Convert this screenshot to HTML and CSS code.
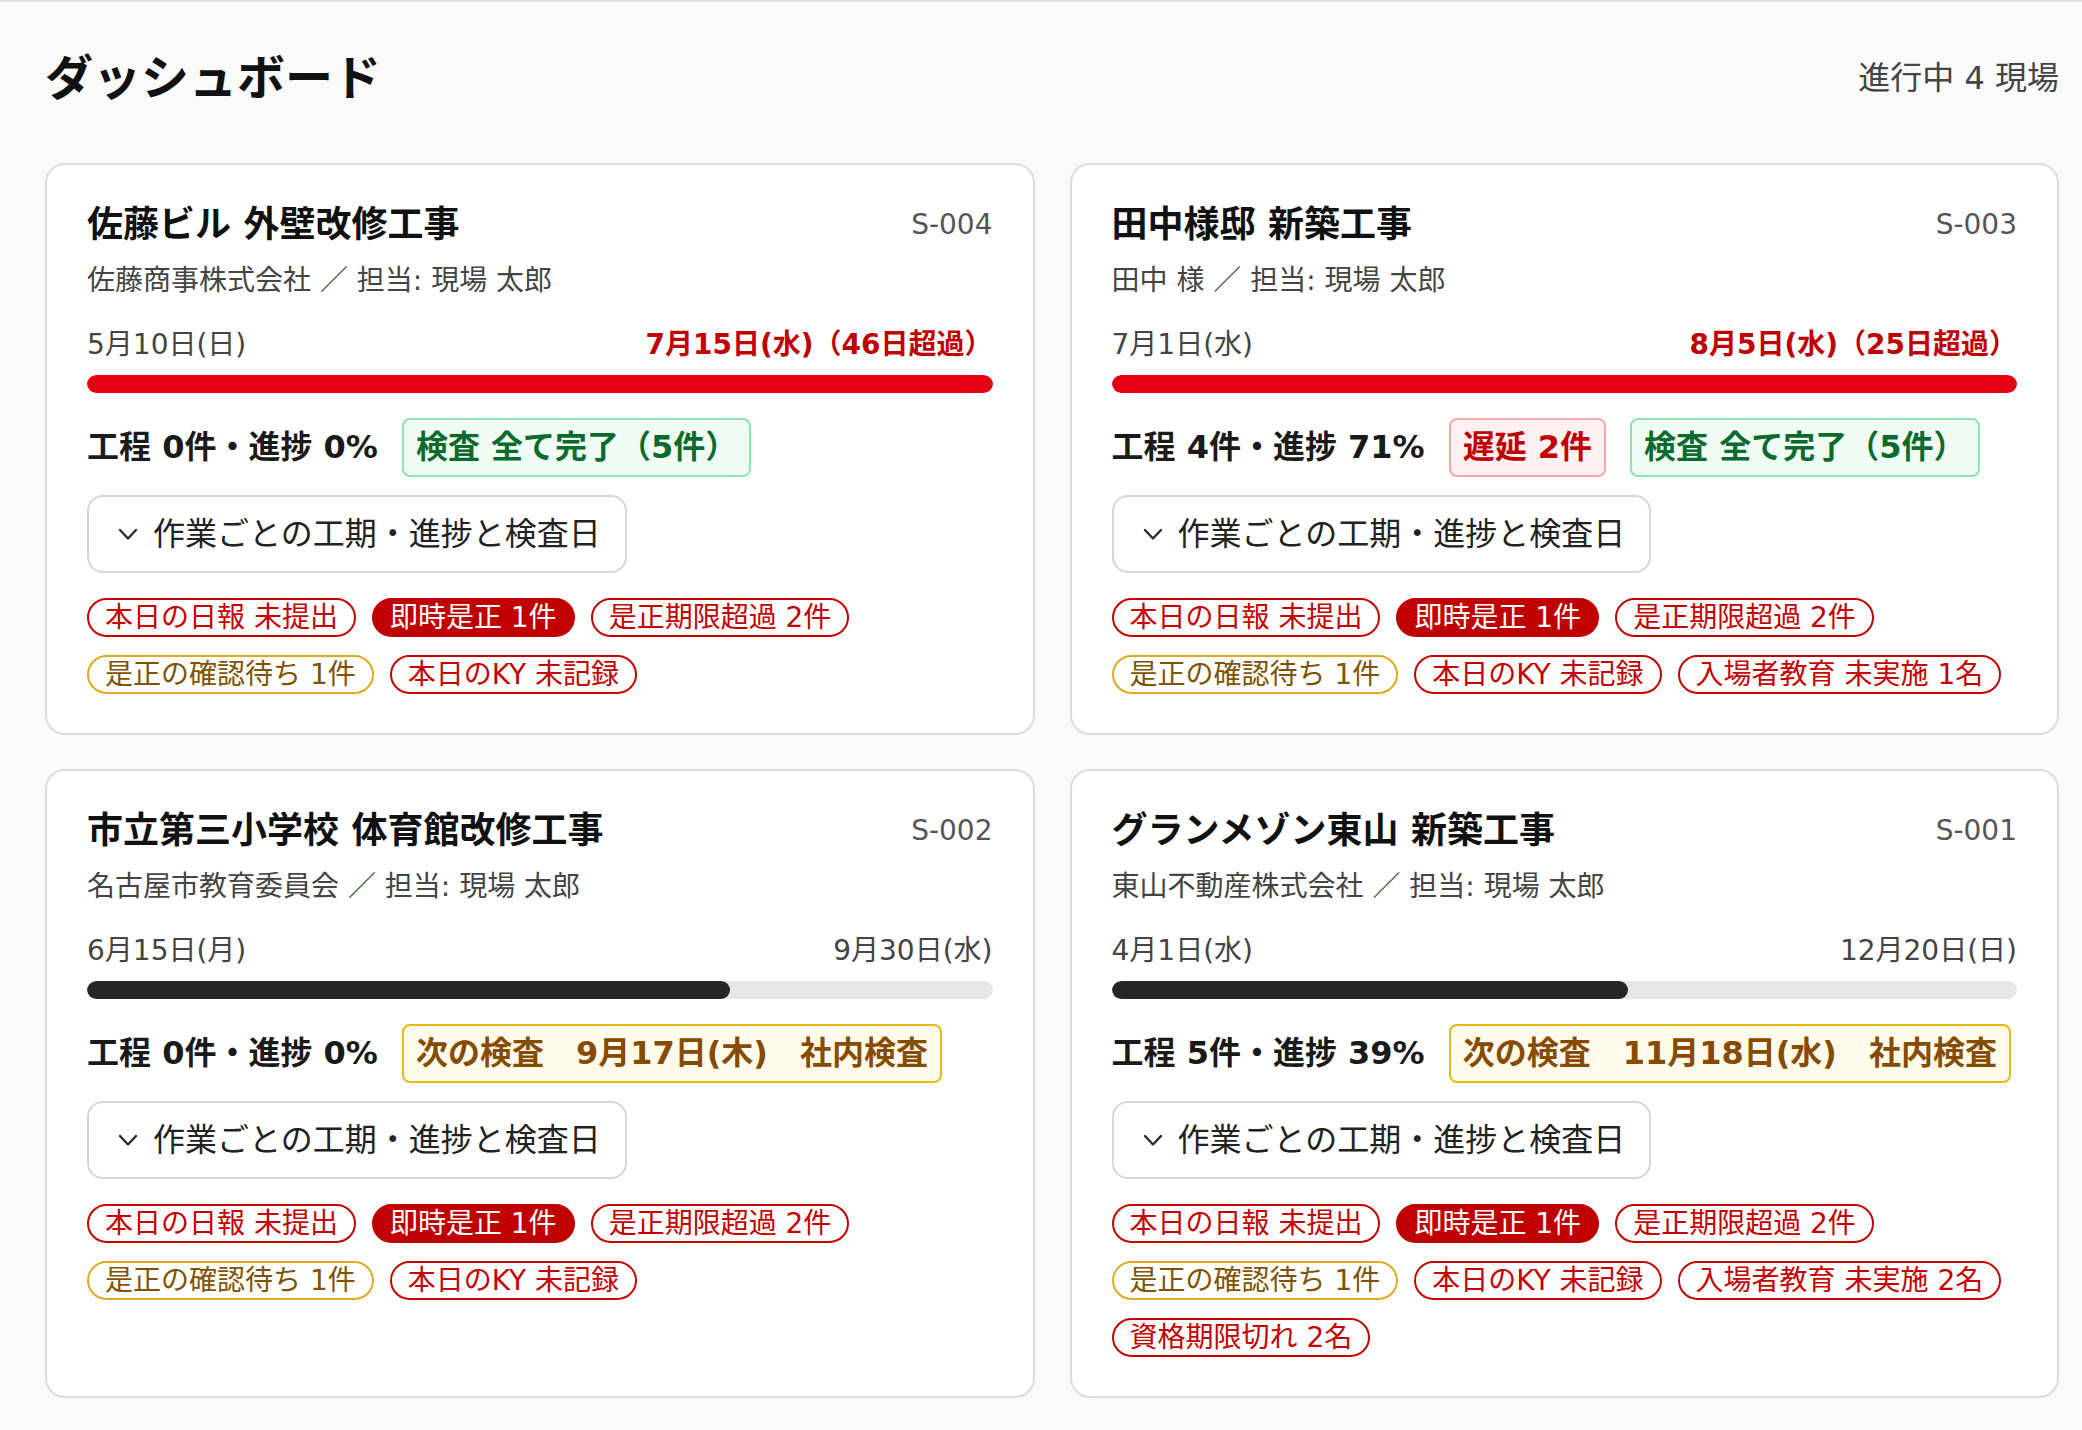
FILE: index.html
```html
<!DOCTYPE html>
<html lang="ja">
<head>
<meta charset="utf-8">
<title>ダッシュボード</title>
<link rel="stylesheet" href="styles.css">
</head>
<body>
<div class="page">
  <header class="page-head">
    <h1 class="page-title">ダッシュボード</h1>
    <div class="page-count">進行中 4 現場</div>
  </header>

  <main class="site-grid">
    <!-- S-004 -->
    <section class="site-card">
      <div class="site-head">
        <h2 class="site-name">佐藤ビル 外壁改修工事</h2>
        <span class="site-code">S-004</span>
      </div>
      <p class="site-meta">佐藤商事株式会社 ／ 担当: 現場 太郎</p>
      <div class="site-dates">
        <span>5月10日(日)</span>
        <span class="date-late">7月15日(水)（46日超過）</span>
      </div>
      <div class="bar"><div class="bar-fill late" style="width:100%"></div></div>
      <div class="site-stats">
        <span class="stat">工程 0件・進捗 0%</span>
        <span class="chip ok">検査 全て完了（5件）</span>
      </div>
      <button class="detail-toggle" type="button">
        <svg class="chev" width="20" height="13" viewBox="0 0 20 13"><polyline points="2,2 10,10.5 18,2"/></svg>
        <span>作業ごとの工期・進捗と検査日</span>
      </button>
      <ul class="tags">
        <li class="tag">本日の日報 未提出</li>
        <li class="tag solid">即時是正 1件</li>
        <li class="tag">是正期限超過 2件</li>
        <li class="tag warn">是正の確認待ち 1件</li>
        <li class="tag">本日のKY 未記録</li>
      </ul>
    </section>

    <!-- S-003 -->
    <section class="site-card">
      <div class="site-head">
        <h2 class="site-name">田中様邸 新築工事</h2>
        <span class="site-code">S-003</span>
      </div>
      <p class="site-meta">田中 様 ／ 担当: 現場 太郎</p>
      <div class="site-dates">
        <span>7月1日(水)</span>
        <span class="date-late">8月5日(水)（25日超過）</span>
      </div>
      <div class="bar"><div class="bar-fill late" style="width:100%"></div></div>
      <div class="site-stats">
        <span class="stat">工程 4件・進捗 71%</span>
        <span class="chip late">遅延 2件</span>
        <span class="chip ok">検査 全て完了（5件）</span>
      </div>
      <button class="detail-toggle" type="button">
        <svg class="chev" width="20" height="13" viewBox="0 0 20 13"><polyline points="2,2 10,10.5 18,2"/></svg>
        <span>作業ごとの工期・進捗と検査日</span>
      </button>
      <ul class="tags">
        <li class="tag">本日の日報 未提出</li>
        <li class="tag solid">即時是正 1件</li>
        <li class="tag">是正期限超過 2件</li>
        <li class="tag warn">是正の確認待ち 1件</li>
        <li class="tag">本日のKY 未記録</li>
        <li class="tag">入場者教育 未実施 1名</li>
      </ul>
    </section>

    <!-- S-002 -->
    <section class="site-card">
      <div class="site-head">
        <h2 class="site-name">市立第三小学校 体育館改修工事</h2>
        <span class="site-code">S-002</span>
      </div>
      <p class="site-meta">名古屋市教育委員会 ／ 担当: 現場 太郎</p>
      <div class="site-dates">
        <span>6月15日(月)</span>
        <span>9月30日(水)</span>
      </div>
      <div class="bar"><div class="bar-fill" style="width:71%"></div></div>
      <div class="site-stats">
        <span class="stat">工程 0件・進捗 0%</span>
        <span class="chip next"><span>次の検査</span><span>9月17日(木)</span><span>社内検査</span></span>
      </div>
      <button class="detail-toggle" type="button">
        <svg class="chev" width="20" height="13" viewBox="0 0 20 13"><polyline points="2,2 10,10.5 18,2"/></svg>
        <span>作業ごとの工期・進捗と検査日</span>
      </button>
      <ul class="tags">
        <li class="tag">本日の日報 未提出</li>
        <li class="tag solid">即時是正 1件</li>
        <li class="tag">是正期限超過 2件</li>
        <li class="tag warn">是正の確認待ち 1件</li>
        <li class="tag">本日のKY 未記録</li>
      </ul>
    </section>

    <!-- S-001 -->
    <section class="site-card">
      <div class="site-head">
        <h2 class="site-name">グランメゾン東山 新築工事</h2>
        <span class="site-code">S-001</span>
      </div>
      <p class="site-meta">東山不動産株式会社 ／ 担当: 現場 太郎</p>
      <div class="site-dates">
        <span>4月1日(水)</span>
        <span>12月20日(日)</span>
      </div>
      <div class="bar"><div class="bar-fill" style="width:57%"></div></div>
      <div class="site-stats">
        <span class="stat">工程 5件・進捗 39%</span>
        <span class="chip next"><span>次の検査</span><span>11月18日(水)</span><span>社内検査</span></span>
      </div>
      <button class="detail-toggle" type="button">
        <svg class="chev" width="20" height="13" viewBox="0 0 20 13"><polyline points="2,2 10,10.5 18,2"/></svg>
        <span>作業ごとの工期・進捗と検査日</span>
      </button>
      <ul class="tags">
        <li class="tag">本日の日報 未提出</li>
        <li class="tag solid">即時是正 1件</li>
        <li class="tag">是正期限超過 2件</li>
        <li class="tag warn">是正の確認待ち 1件</li>
        <li class="tag">本日のKY 未記録</li>
        <li class="tag">入場者教育 未実施 2名</li>
        <li class="tag">資格期限切れ 2名</li>
      </ul>
    </section>
  </main>
</div>
</body>
</html>
```

FILE: styles.css
```css
* {
  box-sizing: border-box;
}

html,
body {
  margin: 0;
}

body {
  background: #fafafa;
  font-family: "DejaVu Sans", "Noto Sans CJK JP", sans-serif;
  color: #1a1a1a;
}

.page {
  border-top: 2px solid #e4e4e4;
  padding: 44px 23px 40px 45px;
}

/* page header */
.page-head {
  display: flex;
  justify-content: space-between;
  align-items: center;
  height: 64px;
  margin-bottom: 53px;
}

.page-title {
  margin: 0;
  font-size: 48px;
  font-weight: 700;
  line-height: 64px;
  color: #111;
}

.page-count {
  font-size: 32px;
  line-height: 64px;
  color: #444;
}

/* site cards */
.site-grid {
  display: grid;
  grid-template-columns: 1fr 1fr;
  column-gap: 35px;
  row-gap: 34px;
}

.site-card {
  display: flex;
  flex-direction: column;
  background: #fff;
  border: 2px solid #dcdcdc;
  border-radius: 20px;
  padding: 38px 40px 39px;
}

.site-head {
  display: flex;
  justify-content: space-between;
  align-items: center;
  line-height: 44px;
}

.site-name {
  margin: 0;
  font-size: 36px;
  font-weight: 700;
  line-height: 44px;
  color: #111;
}

.site-code {
  font-size: 28px;
  color: #555;
}

.site-meta {
  margin: 14px 0 0;
  font-size: 28px;
  line-height: 40px;
  color: #444;
}

.site-dates {
  margin-top: 24px;
  display: flex;
  justify-content: space-between;
  font-size: 28px;
  line-height: 40px;
  color: #444;
}

.date-late {
  color: #c00000;
  font-weight: 700;
}

/* schedule bar */
.bar {
  margin-top: 10px;
  height: 18px;
  border-radius: 9px;
  background: #e6e6e6;
  overflow: hidden;
}

.bar-fill {
  height: 100%;
  border-radius: 9px;
  background: #262626;
}

.bar-fill.late {
  background: #e60012;
}

/* progress line + status chips */
.site-stats {
  margin-top: 25px;
  display: flex;
  align-items: center;
  gap: 24px;
}

.stat {
  font-size: 32px;
  font-weight: 700;
  line-height: 47px;
  color: #1a1a1a;
  white-space: nowrap;
}

.chip {
  display: inline-flex;
  flex-shrink: 0;
  border: 2px solid;
  border-radius: 8px;
  padding: 4px 12px;
  font-size: 32px;
  font-weight: 700;
  line-height: 47px;
  white-space: nowrap;
}

.chip.ok {
  background: #effcf3;
  border-color: #8fe3ac;
  color: #0d6a2f;
}

.chip.late {
  background: #fff1f1;
  border-color: #f4a9a9;
  color: #c00000;
}

.chip.next {
  background: #fffbea;
  border-color: #e8b914;
  color: #874b00;
  gap: 32px;
}

/* task breakdown toggle */
.detail-toggle {
  align-self: flex-start;
  margin-top: 18px;
  display: inline-flex;
  align-items: center;
  gap: 15px;
  height: 78px;
  padding: 0 24px 0 29px;
  background: #fff;
  border: 2px solid #d6d6d6;
  border-radius: 16px;
  font-family: inherit;
  font-size: 32px;
  line-height: 48px;
  color: #222;
}

.chev {
  display: block;
  fill: none;
  stroke: #2a2a2a;
  stroke-width: 2.4;
  stroke-linecap: round;
  stroke-linejoin: round;
}

/* alert tags */
.tags {
  list-style: none;
  margin: 25px 0 0;
  padding: 0;
  display: flex;
  flex-wrap: wrap;
  gap: 18px 16px;
}

.tag {
  border: 2px solid #c80000;
  border-radius: 999px;
  padding: 0 16px;
  font-size: 28px;
  line-height: 35px;
  color: #c40000;
  white-space: nowrap;
}

.tag.solid {
  background: #c00000;
  border-color: #c00000;
  color: #fff;
}

.tag.warn {
  border-color: #e0a920;
  color: #7f5200;
}
```
